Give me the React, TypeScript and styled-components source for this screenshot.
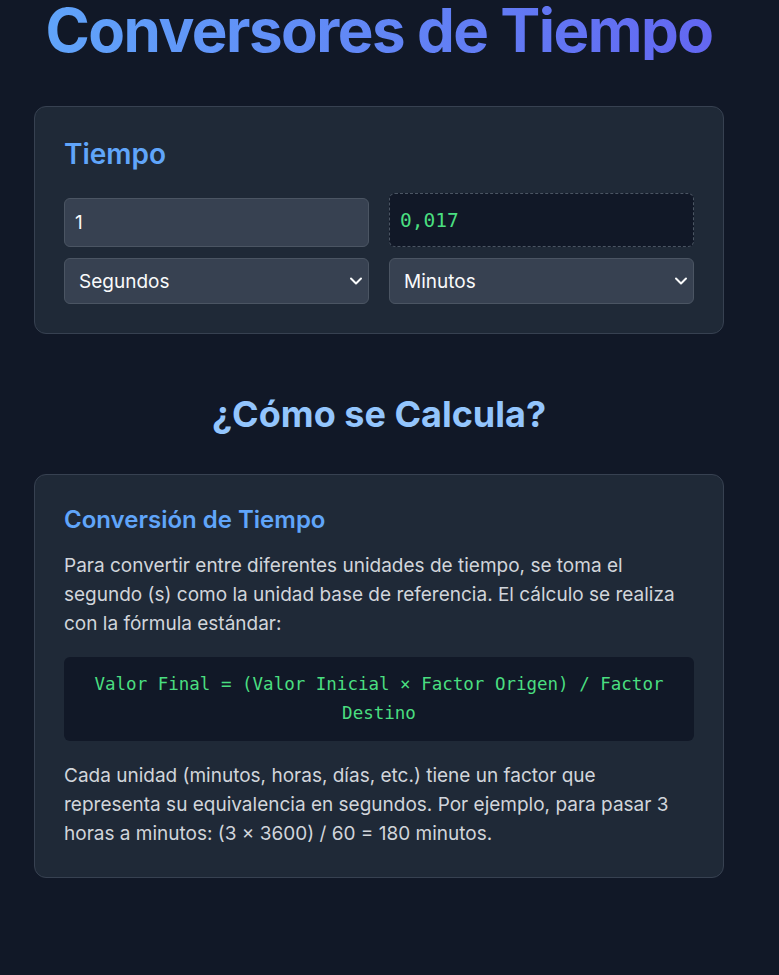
import styled, { createGlobalStyle } from 'styled-components';
import { useState } from 'react';

const GlobalStyle = createGlobalStyle`
    html, body {
        margin: 0;
        padding: 0;
        background: #111827;
    }
    body {
        font-family: Inter, "Noto Sans", sans-serif;
        color: #d1d5db;
    }
    * {
        box-sizing: border-box;
    }
`;

const Page = styled.div`
    min-height: 100vh;
    padding: 0 55px 60px 34px;
`;

const MainTitle = styled.h1`
    margin: 0;
    font-size: 60px;
    line-height: 1;
    font-weight: 700;
    letter-spacing: -0.025em;
    text-align: center;
    white-space: nowrap;
    background: linear-gradient(90deg, #60a5fa, #6366f1);
    -webkit-background-clip: text;
    background-clip: text;
    color: transparent;
`;

const Card = styled.section<{ $top: number }>`
    margin-top: ${(p) => p.$top}px;
    background: #1f2937;
    border: 1px solid #374151;
    border-radius: 12px;
    padding: 29px;
`;

const CardTitle = styled.h2`
    margin: 0 0 21px;
    font-size: 28px;
    line-height: 36px;
    font-weight: 600;
    color: #60a5fa;
`;

const ConverterGrid = styled.div`
    display: grid;
    grid-template-columns: 1fr 1fr;
    column-gap: 20px;
    row-gap: 11px;
    align-items: end;
`;

const ValueInput = styled.input`
    width: 100%;
    height: 49px;
    padding: 0 10px;
    background: #374151;
    border: 1px solid #4b5563;
    border-radius: 6px;
    color: #f9fafb;
    font-family: Inter, sans-serif;
    font-size: 19px;
    outline: none;
`;

const ResultBox = styled.div`
    height: 54px;
    display: flex;
    align-items: center;
    padding: 0 10px;
    background: #111827;
    border: 1px dashed #4b5563;
    border-radius: 6px;
    color: #4ade80;
    font-family: "DejaVu Sans Mono", "Liberation Mono", monospace;
    font-size: 19.5px;
`;

const SelectWrap = styled.div`
    position: relative;
`;

const UnitSelect = styled.select`
    width: 100%;
    height: 46px;
    padding: 0 30px 0 14px;
    appearance: none;
    background: #374151;
    border: 1px solid #4b5563;
    border-radius: 6px;
    color: #f9fafb;
    font-family: Inter, sans-serif;
    font-size: 19px;
    outline: none;
`;

const Chevron = styled.svg`
    position: absolute;
    right: 6px;
    top: 50%;
    transform: translateY(-50%);
    pointer-events: none;
`;

const SectionTitle = styled.h2`
    margin: 60px 0 0;
    font-size: 36px;
    line-height: 40px;
    font-weight: 700;
    text-align: center;
    color: #93c5fd;
`;

const InfoTitle = styled.h3`
    margin: 0 0 15px;
    font-size: 24px;
    line-height: 32px;
    font-weight: 600;
    color: #60a5fa;
`;

const Paragraph = styled.p`
    margin: 0;
    font-size: 19px;
    line-height: 29px;
    color: #d1d5db;
`;

const Formula = styled.div`
    margin: 19px 0 20px;
    padding: 13px 16px;
    background: #111827;
    border-radius: 6px;
    text-align: center;
    color: #4ade80;
    font-family: "DejaVu Sans Mono", "Liberation Mono", monospace;
    font-size: 17.5px;
    line-height: 29px;
`;

const units: Record<string, number> = {
    Segundos: 1,
    Minutos: 60,
    Horas: 3600,
    'Días': 86400,
    Semanas: 604800,
};

const Select = ({ value, onChange }: { value: string; onChange: (v: string) => void }) => (
    <SelectWrap>
        <UnitSelect value={value} onChange={(e) => onChange(e.target.value)}>
            {Object.keys(units).map((u) => (
                <option key={u} value={u}>{u}</option>
            ))}
        </UnitSelect>
        <Chevron width="14" height="10" viewBox="0 0 14 10">
            <path d="M2 2.5 L7 7.5 L12 2.5" fill="none" stroke="#f9fafb" strokeWidth="2" strokeLinecap="round" strokeLinejoin="round" />
        </Chevron>
    </SelectWrap>
);

const App = () => {
    const [value, setValue] = useState('1');
    const [from, setFrom] = useState('Segundos');
    const [to, setTo] = useState('Minutos');

    const num = parseFloat(value.replace(',', '.')) || 0;
    const result = ((num * units[from]) / units[to]).toLocaleString('es-ES', { maximumFractionDigits: 3 });

    return (
        <Page>
            <GlobalStyle />
            <MainTitle>Conversores de Tiempo</MainTitle>

            <Card $top={46}>
                <CardTitle>Tiempo</CardTitle>
                <ConverterGrid>
                    <ValueInput value={value} onChange={(e) => setValue(e.target.value)} />
                    <ResultBox>{result}</ResultBox>
                    <Select value={from} onChange={setFrom} />
                    <Select value={to} onChange={setTo} />
                </ConverterGrid>
            </Card>

            <SectionTitle>¿Cómo se Calcula?</SectionTitle>

            <Card $top={40}>
                <InfoTitle>Conversión de Tiempo</InfoTitle>
                <Paragraph>
                    Para convertir entre diferentes unidades de tiempo, se toma el segundo (s) como la unidad base de referencia. El cálculo se realiza con la fórmula estándar:
                </Paragraph>
                <Formula>Valor Final = (Valor Inicial × Factor Origen) / Factor Destino</Formula>
                <Paragraph>
                    Cada unidad (minutos, horas, días, etc.) tiene un factor que representa su equivalencia en segundos. Por ejemplo, para pasar 3 horas a minutos: (3 × 3600) / 60 = 180 minutos.
                </Paragraph>
            </Card>
        </Page>
    );
};

export default App;
